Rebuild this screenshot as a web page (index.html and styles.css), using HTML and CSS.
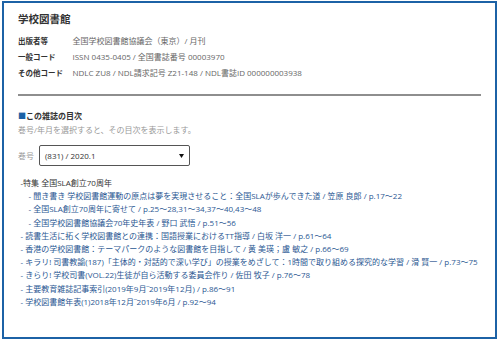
FILE: index.html
```
<!DOCTYPE html>
<html>
<head>
  <meta charset="utf-8">
  <title>学校図書館</title>
  <link rel="stylesheet" href="styles.css">
</head>
<body>

  <div class="frame">
    <h1 class="title">学校図書館</h1>

    <div class="meta">
      <div class="meta-row">
        <span class="meta-label">出版者等</span>
        <span class="meta-value">全国学校図書館協議会（東京）/ 月刊</span>
      </div>
      <div class="meta-row">
        <span class="meta-label">一般コード</span>
        <span class="meta-value">ISSN 0435-0405 / 全国書誌番号 00003970</span>
      </div>
      <div class="meta-row">
        <span class="meta-label">その他コード</span>
        <span class="meta-value">NDLC ZU8 / NDL請求記号 Z21-148 / NDL書誌ID 000000003938</span>
      </div>
    </div>

    <hr class="rule">

    <h2 class="toc-head"><span class="square">■</span>この雑誌の目次</h2>
    <p class="toc-hint">巻号/年月を選択すると、その目次を表示します。</p>

    <div class="issue-row">
      <label class="issue-label">巻号</label>
      <div class="issue-select">
        <span>(831) / 2020.1</span>
        <svg width="5" height="4" viewBox="0 0 5 4"><path d="M0 0h5L2.5 4z" fill="#111"/></svg>
      </div>
    </div>

    <ul class="toc">
      <li class="toc-item">-特集 全国SLA創立70周年
        <ul class="toc-sub">
          <li><a href="#">- 聞き書き 学校図書館運動の原点は夢を実現させること：全国SLAが歩んできた道 / 笠原 良郎 / p.17〜22</a></li>
          <li><a href="#">- 全国SLA創立70周年に寄せて / p.25〜28,31〜34,37〜40,43〜48</a></li>
          <li><a href="#">- 全国学校図書館協議会70年史年表 / 野口 武悟 / p.51〜56</a></li>
        </ul>
      </li>
      <li><a href="#">- 読書生活に拓く学校図書館との連携：国語授業におけるTT指導 / 白坂 洋一 / p.61〜64</a></li>
      <li><a href="#">- 香港の学校図書館：テーマパークのような図書館を目指して / 黄 美瑛；盧 敏之 / p.66〜69</a></li>
      <li><a href="#">- キラリ! 司書教諭(187)「主体的・対話的で深い学び」の授業をめざして：1時間で取り組める探究的な学習 / 滑 賢一 / p.73〜75</a></li>
      <li><a href="#">- きらり! 学校司書(VOL.22)生徒が自ら活動する委員会作り / 佐田 牧子 / p.76〜78</a></li>
      <li><a href="#">- 主要教育雑誌記事索引(2019年9月‾2019年12月) / p.86〜91</a></li>
      <li><a href="#">- 学校図書館年表(1)2018年12月‾2019年6月 / p.92〜94</a></li>
    </ul>
  </div>

</body>
</html>
```
FILE: styles.css
```
body {
  margin: 0;
  padding: 1px 3px 3px 2px;
  font: 8px/13.2px "Open Sans", "Noto Sans CJK JP", sans-serif;
  color: #333;
  background: #fff;
}

.frame {
  box-sizing: border-box;
  height: 338px;
  border: 2px solid #1c62a6;
  padding: 8px 14px 0 14px;
}

.title {
  margin: 0;
  font-size: 10.5px;
  line-height: 16px;
  font-weight: bold;
  color: #333;
}

.meta {
  margin-top: 6px;
}

.meta-row {
  display: flex;
  line-height: 16px;
}

.meta-label {
  width: 54.5px;
  font-size: 7.5px;
  font-weight: bold;
  color: #333;
}

.meta-value {
  color: #666;
}

.rule {
  margin: 13px 0 0 0;
  border: 0;
  height: 2px;
  background: #8e8e8e;
}

.toc-head {
  margin: 13px 0 0 0;
  font-size: 8px;
  line-height: 14px;
  font-weight: bold;
  color: #333;
}

.toc-head .square {
  color: #1c62a6;
}

.toc-hint {
  margin: 0;
  line-height: 13px;
  color: #999;
}

.issue-row {
  display: flex;
  align-items: center;
  gap: 5px;
  margin-top: 9px;
}

.issue-label {
  color: #999;
}

.issue-select {
  box-sizing: border-box;
  width: 151px;
  height: 21px;
  display: flex;
  align-items: center;
  justify-content: space-between;
  padding: 0 5px 0 5px;
  border: 1px solid #555;
  border-radius: 2px;
  color: #333;
}

.toc {
  list-style: none;
  margin: 10px 0 0 0;
  padding: 0 0 0 2.5px;
}

.toc-sub {
  list-style: none;
  margin: 0;
  padding: 0 0 0 8px;
}

.toc a {
  color: #2a5792;
  text-decoration: none;
}
```
